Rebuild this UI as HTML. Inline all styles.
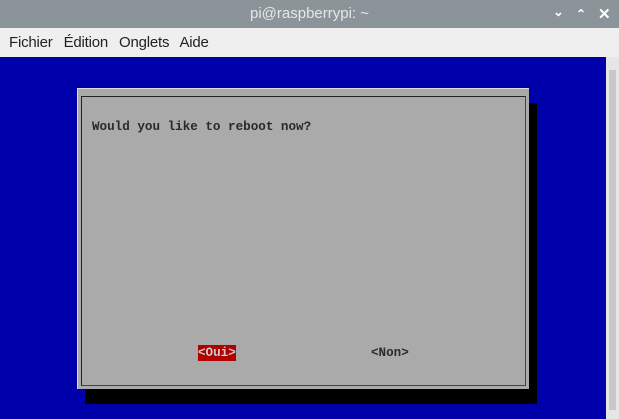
<!DOCTYPE html>
<html><head><style>
body{margin:0;width:619px;height:419px;overflow:hidden;background:#e8e8e8;font-family:"Liberation Sans",sans-serif;position:relative}
div{position:absolute;box-sizing:border-box}
.mono{font-family:"Liberation Mono",monospace;font-size:12.6px;font-weight:bold}
</style></head><body>
<div style="left:0;top:0;width:619px;height:28px;background:#8a9499"></div>
<div style="left:0;top:5px;width:619px;text-align:center;color:#e4e8ea;font-size:15px">pi@raspberrypi: ~</div>
<div style="left:553px;top:4px;color:#fff;font-size:13px;font-weight:bold">&#8964;</div>
<div style="left:576px;top:7px;color:#fff;font-size:12px;font-weight:bold">&#8963;</div>
<div style="left:598px;top:5px;color:#fff;font-size:15px;font-weight:bold">&#10005;</div>
<div style="left:0;top:28px;width:619px;height:29px;background:#efefef"></div>
<div style="left:9px;top:34px;font-size:15px;color:#222;word-spacing:7px;letter-spacing:-0.2px">Fichier Édition Onglets Aide</div>
<div style="left:0;top:57px;width:606px;height:362px;background:#0000aa;border-top:1px solid #111"></div>
<div style="left:606px;top:57px;width:13px;height:362px;background:#e6e6e6"></div>
<div style="left:609px;top:70px;width:7px;height:340px;background:#c8c8c8"></div>
<div style="left:85px;top:103px;width:452px;height:301px;background:#000"></div>
<div style="left:77px;top:88px;width:452px;height:301px;background:#aaa;border-top:1px solid #ddd;border-left:1px solid #ddd"></div>
<div style="left:81px;top:96px;width:445px;height:290px;border:1px solid #222;border-right-color:#444;border-bottom-color:#444"></div>
<div class="mono" style="left:92px;top:120px;color:#2a2a2a">Would you like to reboot now?</div>
<div class="mono" style="left:198px;top:345px;width:38px;height:16px;background:#b00000;color:#ccc;line-height:16px">&lt;Oui&gt;</div>
<div class="mono" style="left:371px;top:345px;color:#2a2a2a;line-height:16px">&lt;Non&gt;</div>
</body></html>
